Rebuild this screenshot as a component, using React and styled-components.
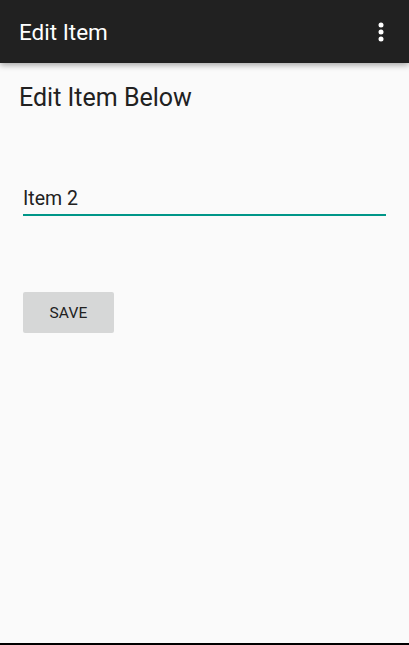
import React from "react";
import styled, { createGlobalStyle } from "styled-components";

const GlobalStyle = createGlobalStyle`
  html, body {
    margin: 0;
    padding: 0;
    height: 100%;
    background: #fafafa;
  }
  #root {
    height: 100%;
  }
`;

const Screen = styled.div`
  display: flex;
  flex-direction: column;
  height: 100vh;
  background: #fafafa;
  font-family: Roboto, "Noto Sans", sans-serif;
  overflow: hidden;
`;

const Toolbar = styled.header`
  height: 63px;
  flex-shrink: 0;
  display: flex;
  align-items: center;
  justify-content: space-between;
  padding: 0 23px 0 19px;
  background: #212121;
  box-shadow: 0 2px 6px rgba(0, 0, 0, 0.35);
  position: relative;
  z-index: 1;
`;

const Title = styled.h1`
  margin: 0;
  font-size: 22.5px;
  font-weight: 400;
  color: #ffffff;
`;

const MenuButton = styled.button`
  border: 0;
  background: none;
  padding: 0;
  width: 10px;
  height: 24px;
  display: flex;
  align-items: center;
  justify-content: center;
`;

const Content = styled.main`
  flex: 1;
  display: flex;
  flex-direction: column;
  align-items: flex-start;
  padding: 20px 23px 0 19px;
`;

const Heading = styled.h2`
  margin: 0;
  font-size: 25px;
  font-weight: 400;
  color: #212121;
  line-height: 30px;
`;

const Field = styled.input`
  margin: 74px 0 0 4px;
  width: calc(100% - 4px);
  box-sizing: border-box;
  border: 0;
  border-bottom: 2px solid #009688;
  background: transparent;
  padding: 0 0 4px 0;
  font-family: inherit;
  font-size: 19.5px;
  color: #212121;
  outline: none;
`;

const Button = styled.button`
  margin: 76px 0 0 4px;
  width: 91px;
  height: 41px;
  border: 0;
  border-radius: 2px;
  background: #d6d7d7;
  font-family: inherit;
  font-size: 15.5px;
  font-weight: 400;
  color: #212121;
  letter-spacing: 0.2px;
`;

const NavEdge = styled.div`
  height: 2px;
  flex-shrink: 0;
  background: #000000;
`;

function OverflowIcon() {
  return (
    <svg width="6" height="20" viewBox="0 0 6 20">
      <circle cx="3" cy="3" r="2.5" fill="#fff" />
      <circle cx="3" cy="10" r="2.5" fill="#fff" />
      <circle cx="3" cy="17" r="2.5" fill="#fff" />
    </svg>
  );
}

export default function App() {
  return (
    <Screen>
      <GlobalStyle />
      <Toolbar>
        <Title>Edit Item</Title>
        <MenuButton aria-label="More options">
          <OverflowIcon />
        </MenuButton>
      </Toolbar>
      <Content>
        <Heading>Edit Item Below</Heading>
        <Field defaultValue="Item 2" />
        <Button>SAVE</Button>
      </Content>
      <NavEdge />
    </Screen>
  );
}
